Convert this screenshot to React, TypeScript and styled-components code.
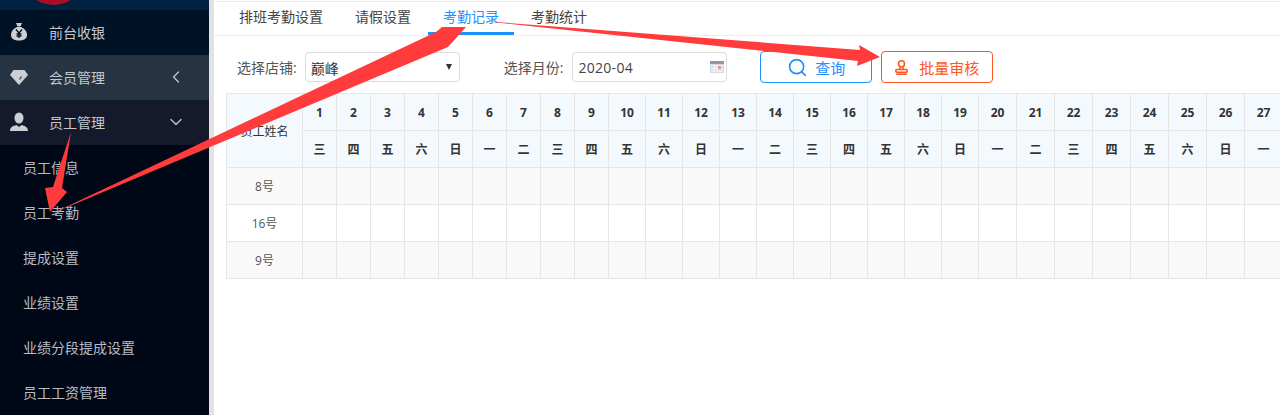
import { createGlobalStyle, styled } from "styled-components";
import { ChevronDown, ChevronLeft, Search } from "lucide-react";

const dayNames = ["三", "四", "五", "六", "日", "一", "二"];
const days = Array.from({ length: 27 }, (_, i) => ({
  num: i + 1,
  name: dayNames[i % 7],
  width: i < 9 ? 34 : i < 19 ? 37 : 38,
}));
const staff = ["8号", "16号", "9号"];
const subMenu = ["员工信息", "员工考勤", "提成设置", "业绩设置", "业绩分段提成设置", "员工工资管理"];
const tabs = ["排班考勤设置", "请假设置", "考勤记录", "考勤统计"];

const GlobalStyle = createGlobalStyle`
  html, body {
    margin: 0;
    height: 100%;
    overflow: hidden;
    background: #fff;
  }
  body {
    font-family: "Open Sans", "Noto Sans CJK SC", sans-serif;
    font-size: 13px;
    color: #333;
  }
  #root {
    height: 100%;
  }
`;

const Page = styled.div`
  display: flex;
  height: 415px;
  width: 1280px;
  overflow: hidden;
  position: relative;
`;

const Sidebar = styled.aside`
  width: 209px;
  flex-shrink: 0;
  background: #000818;
  border-right: 5px solid #e2e2e2;
`;

const LogoBar = styled.div`
  height: 10px;
  background: #00213f;
  overflow: hidden;
  display: flex;
  padding-left: 21px;
`;

const LogoCircle = styled.div`
  width: 65px;
  height: 65px;
  margin-top: -60px;
  border-radius: 50%;
  background: #a80f25;
  flex-shrink: 0;
`;

const MenuRow = styled.div<{ $bg: string }>`
  height: 45px;
  box-sizing: border-box;
  padding-bottom: 2px;
  display: flex;
  align-items: center;
  background: ${(p) => p.$bg};
  color: #c4c8cc;
  font-size: 14px;
`;

const MenuIcon = styled.svg`
  width: 20px;
  height: 20px;
  margin-left: 9px;
  margin-right: 20px;
  fill: #ccd0d3;
  flex-shrink: 0;
`;

const MenuLabel = styled.span`
  flex: 1;
`;

const MenuArrow = styled.span`
  width: 43px;
  display: flex;
  color: #c4c8cc;
`;

const SubRow = styled.div`
  height: 45px;
  box-sizing: border-box;
  padding: 0 0 2px 23px;
  display: flex;
  align-items: center;
  color: #b8bcc2;
  font-size: 14px;
`;

const Main = styled.main`
  flex: 1;
  min-width: 0;
  padding-top: 1px;
`;

const TabBar = styled.div`
  height: 33px;
  display: flex;
  border-top: 1px solid #eee;
  border-bottom: 1px solid #eee;
  padding-left: 10px;
`;

const Tab = styled.div<{ $active?: boolean }>`
  height: 33px;
  padding: 0 15px;
  margin-right: 2px;
  line-height: 29px;
  font-size: 14px;
  box-sizing: border-box;
  color: ${(p) => (p.$active ? "#1e90ff" : "#444")};
  border-bottom: ${(p) => (p.$active ? "3px solid #1e90ff" : "none")};
`;

const FilterBar = styled.div`
  height: 57px;
  box-sizing: border-box;
  padding: 5px 0 0 23px;
  display: flex;
  align-items: center;
`;

const FilterLabel = styled.label<{ $gap: number; $after: number }>`
  font-size: 14px;
  color: #555;
  margin-right: ${(p) => p.$after}px;
  margin-left: ${(p) => p.$gap}px;
`;

const StoreSelect = styled.div`
  width: 155px;
  height: 30px;
  box-sizing: border-box;
  border: 1px solid #ddd;
  border-radius: 4px;
  display: flex;
  align-items: center;
  justify-content: space-between;
  padding: 2px 7px 0 5px;
  font-size: 14px;
  color: #333;
`;

const Caret = styled.span`
  width: 0;
  height: 0;
  margin-top: -3px;
  border-left: 3px solid transparent;
  border-right: 3px solid transparent;
  border-top: 6px solid #333;
`;

const MonthInput = styled.div`
  width: 155px;
  height: 30px;
  box-sizing: border-box;
  border: 1px solid #ddd;
  border-radius: 4px;
  display: flex;
  align-items: center;
  justify-content: space-between;
  padding: 0 2px 0 5px;
  font-size: 14px;
  letter-spacing: 0.3px;
  color: #444;
`;

const CalendarIcon = styled.svg`
  width: 14px;
  height: 14px;
`;

const ActionButton = styled.button<{ $color: string; $space: number; $gap: number }>`
  width: 112px;
  height: 32px;
  box-sizing: border-box;
  margin-left: ${(p) => p.$gap}px;
  border: 1px solid ${(p) => p.$color};
  color: ${(p) => p.$color};
  background: #fff;
  border-radius: 4px;
  display: flex;
  align-items: center;
  justify-content: center;
  gap: ${(p) => p.$space}px;
  font-family: inherit;
  font-size: 15px;
  padding: 0;
`;

const TableWrap = styled.div`
  margin-left: 12px;
  overflow: hidden;
`;

const Grid = styled.table`
  border-collapse: collapse;
  table-layout: fixed;
  width: 1056px;
`;

const DayCol = styled.col<{ $width: number }>`
  width: ${(p) => p.$width}px;
`;

const NameCol = styled.col`
  width: 76px;
`;

const HeadCell = styled.th`
  height: 36px;
  padding: 0;
  border: 1px solid #e6e6e6;
  background: #f4f9fd;
  font-size: 12px;
  font-weight: 700;
  color: #333;
  text-align: center;
`;

const NameHead = styled(HeadCell)`
  font-weight: 400;
`;

const BodyCell = styled.td`
  height: 36px;
  padding: 0;
  border: 1px solid #e6e6e6;
  font-size: 12px;
  color: #555;
  text-align: center;
`;

const BodyRow = styled.tr`
  &:nth-child(odd) {
    background: #f9f9f9;
  }
`;

const ArrowLayer = styled.svg`
  position: absolute;
  left: 0;
  top: 0;
  width: 1280px;
  height: 415px;
  pointer-events: none;
`;

function Calendar() {
  return (
    <CalendarIcon viewBox="0 0 14 14">
      <rect x="0" y="1" width="14" height="12" fill="#d5dbe4" />
      <rect x="0" y="1" width="14" height="3" fill="#8d99ab" />
      <path d="M1 6h12M1 8.5h12M1 11h12M4 5v7M7 5v7M10 5v7" stroke="#fff" strokeWidth="0.8" />
      <rect x="8" y="6" width="3" height="3" fill="#e09a8a" />
    </CalendarIcon>
  );
}

function StampIcon() {
  return (
    <svg width="13" height="15" viewBox="0 0 13 15" fill="none" stroke="#ff5722" strokeWidth="1.6">
      <circle cx="6.500" cy="3.800" r="3" />
      <path d="M5.300 6.800c0 1.200-.3 1.700-.8 2.700M7.700 6.800c0 1.200.3 1.700.8 2.700" />
      <rect x="0.800" y="9.500" width="11.400" height="2.800" rx="1" />
      <path d="M1.200 14.200h10.600" />
    </svg>
  );
}

export default function App() {
  return (
    <Page>
      <GlobalStyle />
      <Sidebar>
        <LogoBar>
          <LogoCircle />
        </LogoBar>
        <MenuRow $bg="#001226">
          <MenuIcon viewBox="0 0 20 20">
            <path d="M7 1h6l-1.500 3.500h-3zM8 5h4c4 1.500 6 5 6 8 0 4-3.500 5.500-8 5.500S2 17 2 13c0-3 2-6.500 6-8z" />
            <path d="M7 7.500l3 3.500 3-3.500M10 11v5M7.500 12h5M7.500 14h5" stroke="#001226" strokeWidth="1.300" fill="none" />
          </MenuIcon>
          <MenuLabel>前台收银</MenuLabel>
        </MenuRow>
        <MenuRow $bg="#253342">
          <MenuIcon viewBox="0 0 20 20">
            <path d="M4.500 3h11L19 8l-9 10L1 8z" />
            <path d="M12.500 9.500L10.500 12.500" stroke="#253342" strokeWidth="1.200" fill="none" />
          </MenuIcon>
          <MenuLabel>会员管理</MenuLabel>
          <MenuArrow>
            <ChevronLeft size={20} strokeWidth={1.5} />
          </MenuArrow>
        </MenuRow>
        <MenuRow $bg="#141a2b">
          <MenuIcon viewBox="0 0 20 20">
            <ellipse cx="10" cy="6" rx="4.500" ry="5.500" />
            <path d="M1 19c0-4 3-5 6.500-6l2.500 2 2.500-2c3.500 1 6.500 2 6.500 6z" />
          </MenuIcon>
          <MenuLabel>员工管理</MenuLabel>
          <MenuArrow>
            <ChevronDown size={20} strokeWidth={1.5} />
          </MenuArrow>
        </MenuRow>
        {subMenu.map((item) => (
          <SubRow key={item}>{item}</SubRow>
        ))}
      </Sidebar>
      <Main>
        <TabBar>
          {tabs.map((tab) => (
            <Tab key={tab} $active={tab === "考勤记录"}>
              {tab}
            </Tab>
          ))}
        </TabBar>
        <FilterBar>
          <FilterLabel $gap={0} $after={8}>选择店铺:</FilterLabel>
          <StoreSelect>
            巅峰
            <Caret />
          </StoreSelect>
          <FilterLabel $gap={44} $after={9}>选择月份:</FilterLabel>
          <MonthInput>
            2020-04
            <Calendar />
          </MonthInput>
          <ActionButton $color="#1e90ff" $space={7} $gap={33}>
            <Search size={21} strokeWidth={1.8} />
            查询
          </ActionButton>
          <ActionButton $color="#ff5722" $space={11} $gap={9}>
            <StampIcon />
            批量审核
          </ActionButton>
        </FilterBar>
        <TableWrap>
          <Grid>
            <colgroup>
              <NameCol />
              {days.map((d) => (
                <DayCol key={d.num} $width={d.width} />
              ))}
            </colgroup>
            <thead>
              <tr>
                <NameHead rowSpan={2}>员工姓名</NameHead>
                {days.map((d) => (
                  <HeadCell key={d.num}>{d.num}</HeadCell>
                ))}
              </tr>
              <tr>
                {days.map((d) => (
                  <HeadCell key={d.num}>{d.name}</HeadCell>
                ))}
              </tr>
            </thead>
            <tbody>
              {staff.map((name) => (
                <BodyRow key={name}>
                  <BodyCell>{name}</BodyCell>
                  {days.map((d) => (
                    <BodyCell key={d.num} />
                  ))}
                </BodyRow>
              ))}
            </tbody>
          </Grid>
        </TableWrap>
      </Main>
      <ArrowLayer viewBox="0 0 1280 415">
        <polygon points="71,132 62,188 67,192 50,212 45,188 53,187" fill="#ff3b3b" />
        <polygon points="51,214 436,32 442,27 466,27 448,47" fill="#ff3b3b" />
        <polygon points="483,21 860,50 859,45 880,57 857,66 858,61" fill="#ff3b3b" />
      </ArrowLayer>
    </Page>
  );
}
